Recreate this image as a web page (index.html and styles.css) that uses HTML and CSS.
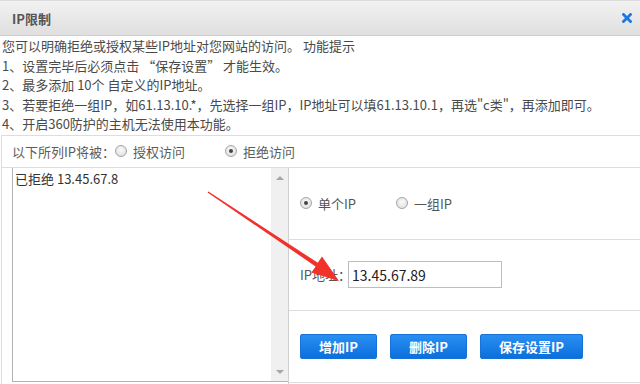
FILE: index.html
```html
<!DOCTYPE html>
<html lang="zh-CN">
<head>
  <meta charset="UTF-8">
  <meta name="viewport" content="width=device-width, initial-scale=1.0">
  <title>IP限制</title>
  <link rel="stylesheet" href="styles.css">
</head>
<body>
  <div class="dialog">
    <!-- Title Bar -->
    <div class="titlebar">
      <span class="title">IP限制</span>
      <span class="close">
        <svg width="10" height="10" viewBox="0 0 10 10">
          <path d="M1.5 1.5 L8.5 8.5 M8.5 1.5 L1.5 8.5" stroke="#1a78e0" stroke-width="2.8" stroke-linecap="square"/>
        </svg>
      </span>
    </div>

    <!-- Tips -->
    <div class="tips">
      <p>您可以明确拒绝或授权某些IP地址对您网站的访问。 功能提示</p>
      <p>1、设置完毕后必须点击 “保存设置” 才能生效。</p>
      <p>2、最多添加 10个 自定义的IP地址。</p>
      <p>3、若要拒绝一组IP，如61.13.10.*，先选择一组IP，IP地址可以填61.13.10.1，再选"c类"，再添加即可。</p>
      <p>4、开启360防护的主机无法使用本功能。</p>
    </div>

    <!-- Settings Panel -->
    <div class="panel">
      <div class="mode-row">
        <span>以下所列IP将被：</span>
        <label class="opt"><span class="radio"></span>授权访问</label>
        <label class="opt opt-far"><span class="radio checked"></span>拒绝访问</label>
      </div>

      <div class="panel-body">
        <div class="list-col">
          <div class="ip-list">
            <div class="ip-items">
              <div>已拒绝 13.45.67.8</div>
            </div>
            <div class="scrollbar">
              <span class="arrow-up"></span>
              <span class="arrow-down"></span>
            </div>
          </div>
        </div>

        <div class="form-col">
          <div class="form-row">
            <label class="opt"><span class="radio checked"></span>单个IP</label>
            <label class="opt opt-far"><span class="radio"></span>一组IP</label>
          </div>
          <div class="form-row">
            <label class="field-label">IP地址：</label>
            <input type="text" class="ip-input" value="13.45.67.89">
          </div>
          <div class="form-row buttons">
            <button type="button" class="btn">增加IP</button>
            <button type="button" class="btn">删除IP</button>
            <button type="button" class="btn">保存设置IP</button>
          </div>
        </div>
      </div>
    </div>

    <!-- Annotation arrow -->
    <svg class="annotation" width="640" height="384" viewBox="0 0 640 384">
      <polygon fill="#f0322b" points="207.6,192.6 315.6,266.4 311.4,272.6 339,281 322,256.6 317.8,262.8 208.4,191.4"/>
    </svg>
  </div>
</body>
</html>
```

FILE: styles.css
```css
/* ===== IP restriction dialog ===== */
:root {
  --line-color: #dddddd;
  --text-color: #4a4a4a;
  --blue: #1a7fe6;
  --font-family: "Noto Sans CJK SC", "Noto Sans", sans-serif;
}

body {
  margin: 0;
  font-family: var(--font-family);
  font-size: 13px;
  color: var(--text-color);
  background: #fff;
}

.dialog {
  position: relative;
  width: 640px;
  height: 384px;
  overflow: hidden;
}

.titlebar {
  height: 36px;
  box-sizing: border-box;
  display: flex;
  align-items: center;
  justify-content: space-between;
  padding: 0 8px 0 12px;
  border-top: 1px solid #dcdcdc;
  border-bottom: 1px solid #cfcfcf;
  background: linear-gradient(#f2f2f2, #dfdfdf);
}

.title {
  font-weight: bold;
  color: #555;
}

.close {
  display: flex;
}

.tips {
  padding: 0 0 1px 2px;
}

.tips p {
  margin: 0;
  line-height: 19.5px;
  white-space: nowrap;
}

.panel {
  margin-left: 1px;
  border-top: 1px solid var(--line-color);
  border-left: 1px solid var(--line-color);
}

.mode-row {
  height: 31px;
  display: flex;
  align-items: center;
  padding-left: 10px;
  border-bottom: 1px solid var(--line-color);
  color: #5c5c5c;
}

.opt {
  display: flex;
  align-items: center;
  gap: 6px;
}

.opt-far {
  margin-left: 40px;
}

.radio {
  width: 12px;
  height: 12px;
  box-sizing: border-box;
  border: 1px solid #a5a5a5;
  border-radius: 50%;
  background: radial-gradient(circle at 50% 40%, #fbfbfb, #d9d9d9);
  display: flex;
  align-items: center;
  justify-content: center;
}

.radio.checked::after {
  content: "";
  width: 4px;
  height: 4px;
  border-radius: 50%;
  background: #444;
}

.panel-body {
  display: flex;
}

.list-col {
  width: 286px;
  box-sizing: border-box;
  padding: 0 0 2px 10px;
}

.ip-list {
  height: 213px;
  display: flex;
  border-left: 1px solid #b3b3b3;
  border-bottom: 1px solid #b3b3b3;
}

.ip-items {
  flex: 1;
  padding: 1px 2px;
  line-height: 20px;
  color: #333;
}

.scrollbar {
  width: 17px;
  background: #f0f0f0;
  display: flex;
  flex-direction: column;
  justify-content: space-between;
  align-items: center;
  padding: 8px 0 7px;
  box-sizing: border-box;
}

.arrow-up,
.arrow-down {
  width: 0;
  height: 0;
  border-left: 4px solid transparent;
  border-right: 4px solid transparent;
}

.arrow-up {
  border-bottom: 4px solid #a6a6a6;
}

.arrow-down {
  border-top: 4px solid #a6a6a6;
}

.form-col {
  flex: 1;
  border-left: 1px solid #cfcfcf;
}

.form-row {
  height: 71px;
  display: flex;
  align-items: center;
  padding-left: 11px;
  border-bottom: 1px solid var(--line-color);
  color: #555;
}

.form-row:nth-child(2) {
  height: 70px;
}

.field-label {
  margin-right: -3px;
}

.ip-input {
  width: 154px;
  height: 27px;
  box-sizing: border-box;
  border: 1px solid #bdbdbd;
  padding: 0 3px;
  font-family: var(--font-family);
  font-size: 14px;
  color: #222;
  outline: none;
}

.buttons {
  gap: 13px;
}

.btn {
  height: 25px;
  padding: 0 18px;
  border: 1px solid #1672d6;
  border-radius: 2px;
  background: linear-gradient(#2a8ff2, #0b6fdc);
  color: #fff;
  font-family: var(--font-family);
  font-size: 13px;
  font-weight: bold;
  cursor: pointer;
}

.annotation {
  position: absolute;
  left: 0;
  top: 0;
  pointer-events: none;
}
```
